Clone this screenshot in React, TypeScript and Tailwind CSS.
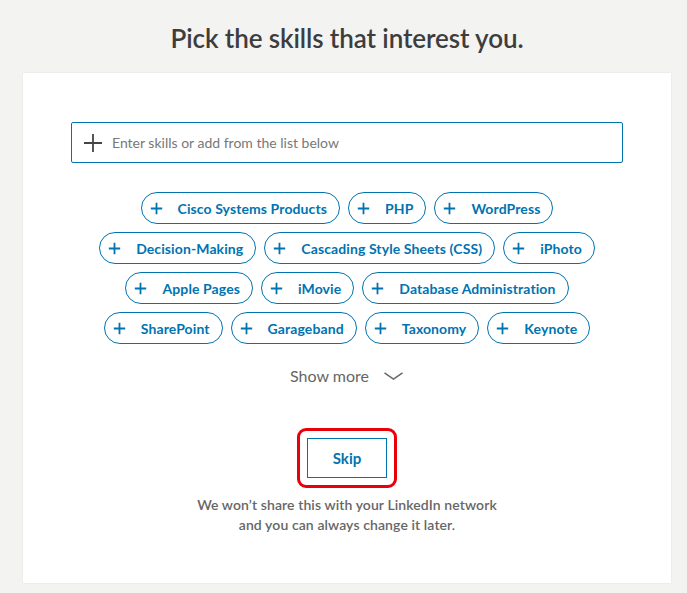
import React from "react";

const rows: string[][] = [
  ["Cisco Systems Products", "PHP", "WordPress"],
  ["Decision-Making", "Cascading Style Sheets (CSS)", "iPhoto"],
  ["Apple Pages", "iMovie", "Database Administration"],
  ["SharePoint", "Garageband", "Taxonomy", "Keynote"],
];

function Plus({ className }: { className?: string }) {
  return (
    <svg viewBox="0 0 16 16" className={className} fill="none" stroke="currentColor" strokeWidth="2.2">
      <path d="M8 1v14M1 8h14" />
    </svg>
  );
}

function SkillPill({ label }: { label: string }) {
  return (
    <button className="h-8 flex items-center rounded-full border border-[#0073b1] pl-[8px] pr-[12px] text-[#0073b1] text-[14px] font-bold bg-white tracking-[0.1px]">
      <Plus className="w-[13px] h-[13px] mr-[15px]" />
      <span>{label}</span>
    </button>
  );
}

export default function App() {
  return (
    <div
      className="min-h-[593px] w-full bg-[#f3f3f2] pt-[23px]"
      style={{ fontFamily: "Lato, 'Open Sans', sans-serif" }}
    >
      <div className="ml-[23px] w-[648px]">
        <h1 className="text-center text-[26px] leading-[30px] text-[#3d3d3d] font-semibold tracking-[-0.1px]">
          Pick the skills that interest you.
        </h1>

        <div className="mt-[20px] h-[510px] bg-white shadow-[0_0_2px_rgba(0,0,0,0.08)] px-[48px] pt-[49px]">
          <div className="h-[41px] flex items-center border border-[#0073b1] rounded-[2px] pl-[12px]">
            <svg viewBox="0 0 18 18" className="w-[18px] h-[18px] text-[#434649]" fill="none" stroke="currentColor" strokeWidth="1.8">
              <path d="M9 0v18M0 9h18" />
            </svg>
            <span className="ml-[10px] text-[14px] text-[#787878]">Enter skills or add from the list below</span>
          </div>

          <div className="mt-[29px] flex flex-col items-center gap-y-2">
            {rows.map((row, i) => (
              <div key={i} className="flex gap-x-[8px]">
                {row.map((s) => (
                  <SkillPill key={s} label={s} />
                ))}
              </div>
            ))}
          </div>

          <div className="mt-[20px] flex items-center justify-center gap-[14px] text-[#666] text-[16px]">
            <span>Show more</span>
            <svg viewBox="0 0 22 10" className="w-[21px] h-[9px]" fill="none" stroke="#666" strokeWidth="1.6">
              <path d="M1 1l10 7 10-7" />
            </svg>
          </div>

          <div className="mt-[40px] flex justify-center">
            <div className="rounded-[9px] border-[3px] border-[#e8000b] p-[7px]">
              <button className="w-[80px] h-[40px] border border-[#0073b1] text-[#0073b1] font-bold text-[15px] bg-white">
                Skip
              </button>
            </div>
          </div>

          <p className="mt-[7px] text-center text-[14px] leading-[20px] text-[#666] font-semibold tracking-[0.1px]">
            We won’t share this with your LinkedIn network
            <br />
            and you can always change it later.
          </p>
        </div>
      </div>
    </div>
  );
}
